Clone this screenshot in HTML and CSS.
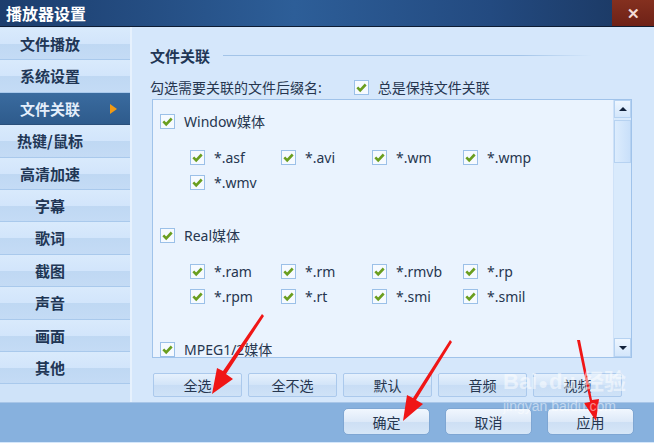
FILE: index.html
```html
<!DOCTYPE html>
<html>
<head>
  <title>播放器设置</title>
  <meta name="viewport" content="width=device-width, initial-scale=1.0">
  <link rel="stylesheet" href="styles.css">
</head>
<body>
  <div class="window">
    <div class="titlebar">
      <span class="title">播放器设置</span>
      <span class="close">&#10005;</span>
    </div>

    <div class="content">
      <ul class="sidebar">
        <li>文件播放</li>
        <li>系统设置</li>
        <li class="active">文件关联<span class="marker"></span></li>
        <li>热键/鼠标</li>
        <li>高清加速</li>
        <li>字幕</li>
        <li>歌词</li>
        <li>截图</li>
        <li>声音</li>
        <li>画面</li>
        <li>其他</li>
      </ul>

      <div class="main">
        <div class="heading">
          <span>文件关联</span>
          <span class="rule"></span>
        </div>

        <div class="option-row">
          <span>勾选需要关联的文件后缀名:</span>
          <label class="check keep"><span class="box"></span>总是保持文件关联</label>
        </div>

        <div class="listbox">
          <div class="list-inner">
            <div class="group">
              <label class="check head"><span class="box"></span>Window媒体</label>
              <div class="types">
                <label class="check"><span class="box"></span>*.asf</label>
                <label class="check"><span class="box"></span>*.avi</label>
                <label class="check"><span class="box"></span>*.wm</label>
                <label class="check"><span class="box"></span>*.wmp</label>
                <label class="check"><span class="box"></span>*.wmv</label>
              </div>
            </div>
            <div class="group">
              <label class="check head"><span class="box"></span>Real媒体</label>
              <div class="types">
                <label class="check"><span class="box"></span>*.ram</label>
                <label class="check"><span class="box"></span>*.rm</label>
                <label class="check"><span class="box"></span>*.rmvb</label>
                <label class="check"><span class="box"></span>*.rp</label>
                <label class="check"><span class="box"></span>*.rpm</label>
                <label class="check"><span class="box"></span>*.rt</label>
                <label class="check"><span class="box"></span>*.smi</label>
                <label class="check"><span class="box"></span>*.smil</label>
              </div>
            </div>
            <div class="group">
              <label class="check head"><span class="box"></span>MPEG1/2媒体</label>
            </div>
          </div>
          <div class="scrollbar">
            <span class="sb-btn up"></span>
            <span class="sb-thumb"></span>
            <span class="sb-track"></span>
            <span class="sb-btn down"></span>
          </div>
        </div>

        <div class="select-row">
          <button>全选</button>
          <button>全不选</button>
          <button>默认</button>
          <button>音频</button>
          <button>视频</button>
        </div>
      </div>
    </div>

    <div class="footer">
      <button>确定</button>
      <button>取消</button>
      <button>应用</button>
    </div>

    <!-- screenshot annotations -->
    <svg class="arrows" width="654" height="443" viewBox="0 0 654 443">
      <polygon points="262,314 264,316 226,374 233,379 212,394 217,368 223,371" fill="#f01616"/>
      <polygon points="450,340 452,342 416,400 423,404 403,421 407,395 413,398" fill="#f01616"/>
      <polygon points="577,340 580,340 592,400 599,399 596,421 584,403 590,402" fill="#f01616"/>
    </svg>
    <div class="watermark">
      <span class="wm-big">Bai<span class="paw">&#9679;</span>du 经验</span>
      <span class="wm-small">jingyan.baidu.com</span>
    </div>
  </div>
</body>
</html>
```

FILE: styles.css
```css
body {
  margin: 0;
  padding: 0;
  font-family: "Noto Sans", "Noto Sans CJK SC", sans-serif;
  font-size: 14px;
  color: #26364f;
}

.window {
  position: relative;
  width: 654px;
  height: 443px;
  overflow: hidden;
  background: #d5e7fb;
}

.titlebar {
  height: 26px;
  border-bottom: 1px solid #0d1c33;
  background: linear-gradient(to right, #1c3d6d, #2d5e98 45%, #234a80 75%, #1a365f);
  display: flex;
  justify-content: space-between;
  align-items: stretch;
}

.title {
  color: #fff;
  font-family: "Noto Sans CJK SC", sans-serif;
  font-weight: bold;
  font-size: 16px;
  line-height: 26px;
  padding-left: 6px;
}

.close {
  width: 42px;
  background: linear-gradient(#84301f, #6e2117);
  color: #f3dcd8;
  font-weight: bold;
  font-size: 15px;
  display: flex;
  justify-content: center;
  align-items: center;
}

.content {
  display: flex;
  height: 375px;
}

/* left menu */
.sidebar {
  list-style: none;
  margin: 0;
  padding: 1px 0 0 0;
  width: 130px;
  border-right: 2px solid #e6f1fd;
  background: #cfe3f9;
}

.sidebar li {
  position: relative;
  box-sizing: border-box;
  width: 130px;
  height: 32.4px;
  padding-right: 30px;
  border-bottom: 1px solid #a9c9ec;
  background: linear-gradient(#d9eafc 0%, #d2e5fb 50%, #bfd8f3 51%, #c4dbf5 100%);
  font-family: "Noto Sans CJK SC", sans-serif;
  font-weight: bold;
  font-size: 15px;
  color: #213655;
  text-align: center;
  line-height: 31px;
}

.sidebar li.active {
  background: linear-gradient(#3a6b9f, #2e5b8c);
  color: #e4eefb;
  border-bottom-color: #2a4f7a;
}

.marker {
  position: absolute;
  left: 110px;
  top: 11px;
  width: 0;
  height: 0;
  border-top: 5px solid transparent;
  border-bottom: 5px solid transparent;
  border-left: 7px solid #f29a12;
}

/* right panel */
.main {
  flex: 1;
  padding: 18px 22px 5px 18px;
  display: flex;
  flex-direction: column;
}

.heading {
  display: flex;
  align-items: center;
  height: 20px;
  margin-bottom: 11px;
  font-family: "Noto Sans CJK SC", sans-serif;
  font-weight: bold;
  font-size: 15px;
  color: #213655;
}

.rule {
  flex: 1;
  height: 1px;
  margin: 0 40px 0 13px;
  background: linear-gradient(to right, #a3c4e8, #a3c4e8 80%, rgba(163, 196, 232, 0));
}

.option-row {
  height: 22px;
  display: flex;
  align-items: center;
}

.keep {
  margin-left: 32px;
}

.check {
  display: flex;
  align-items: center;
  gap: 9px;
  white-space: nowrap;
}

.box {
  box-sizing: border-box;
  width: 15px;
  height: 15px;
  flex: none;
  border: 1px solid #9bc0e8;
  background: #f6faff url("data:image/svg+xml,%3Csvg xmlns='http://www.w3.org/2000/svg' width='13' height='13'%3E%3Cpath d='M2.3 6.4 L5.2 9.4 L10.7 3.5' fill='none' stroke='%236a9e1f' stroke-width='2.6'/%3E%3C/svg%3E") center no-repeat;
}

.listbox {
  margin: 1px 0 0 2px;
  height: 259px;
  box-sizing: border-box;
  border: 1px solid #a0c3ea;
  background: #eaf3fe;
  display: flex;
}

.list-inner {
  flex: 1;
  overflow: hidden;
  padding: 8px 0 0 7px;
}

.group {
  margin-bottom: 27px;
}

.group .head {
  height: 26px;
}

.types {
  margin: 11px 0 0 30px;
  display: grid;
  grid-template-columns: repeat(4, 91px);
  grid-auto-rows: 25px;
}

.scrollbar {
  width: 17px;
  display: flex;
  flex-direction: column;
  background: #d9eafc;
  border-left: 1px solid #cfe2f8;
}

.sb-btn {
  height: 18px;
  box-sizing: border-box;
  border: 1px solid #b6d2f1;
  background: linear-gradient(#eef6ff, #d3e6fb);
  display: flex;
  justify-content: center;
  align-items: center;
}

.sb-btn::after {
  content: "";
  width: 0;
  height: 0;
  border-left: 4px solid transparent;
  border-right: 4px solid transparent;
}

.up::after {
  border-bottom: 4px solid #12213a;
}

.down::after {
  border-top: 4px solid #12213a;
}

.sb-thumb {
  height: 43px;
  margin-top: 2px;
  box-sizing: border-box;
  border: 1px solid #b6d2f1;
  background: linear-gradient(to right, #dcecfd, #c9e0fa);
}

.sb-track {
  flex: 1;
}

.down {
  height: 19px;
}

.select-row {
  margin: 15px 0 0 3px;
  display: flex;
  gap: 6px;
}

button {
  font-family: "Noto Sans CJK SC", sans-serif;
  font-size: 14px;
  color: #26364f;
  padding: 0;
  cursor: pointer;
}

.select-row button {
  width: 89px;
  height: 24px;
  border: 1px solid #abc9ec;
  border-radius: 2px;
  background: linear-gradient(#e6f1fd, #d2e4f8 50%, #c8ddf5 51%, #cfe2f7);
}

.footer {
  height: 40px;
  box-sizing: border-box;
  border-top: 1px solid #a8c6e8;
  background: #87b1de;
  display: flex;
  justify-content: flex-end;
  align-items: flex-start;
  gap: 15px;
  padding: 5px 20px 0 0;
}

.footer button {
  width: 87px;
  height: 27px;
  border: 1px solid #7ea6d3;
  border-radius: 5px;
  background: linear-gradient(#f1f7fe, #dde9f8 50%, #cddff4 51%, #d6e6f7);
}

/* annotation overlay */
.arrows {
  position: absolute;
  left: 0;
  top: 0;
  pointer-events: none;
}

.watermark {
  position: absolute;
  left: 503px;
  top: 368px;
  display: flex;
  flex-direction: column;
  color: rgba(255, 255, 255, 0.5);
  white-space: nowrap;
  pointer-events: none;
}

.wm-big {
  font-family: "Liberation Sans", "Noto Sans CJK SC", sans-serif;
  font-weight: bold;
  font-size: 22px;
  line-height: 28px;
}

.paw {
  font-size: 16px;
  margin: 0 1px;
}

.wm-small {
  font-family: "Liberation Sans", sans-serif;
  font-size: 14px;
  line-height: 16px;
}
```
